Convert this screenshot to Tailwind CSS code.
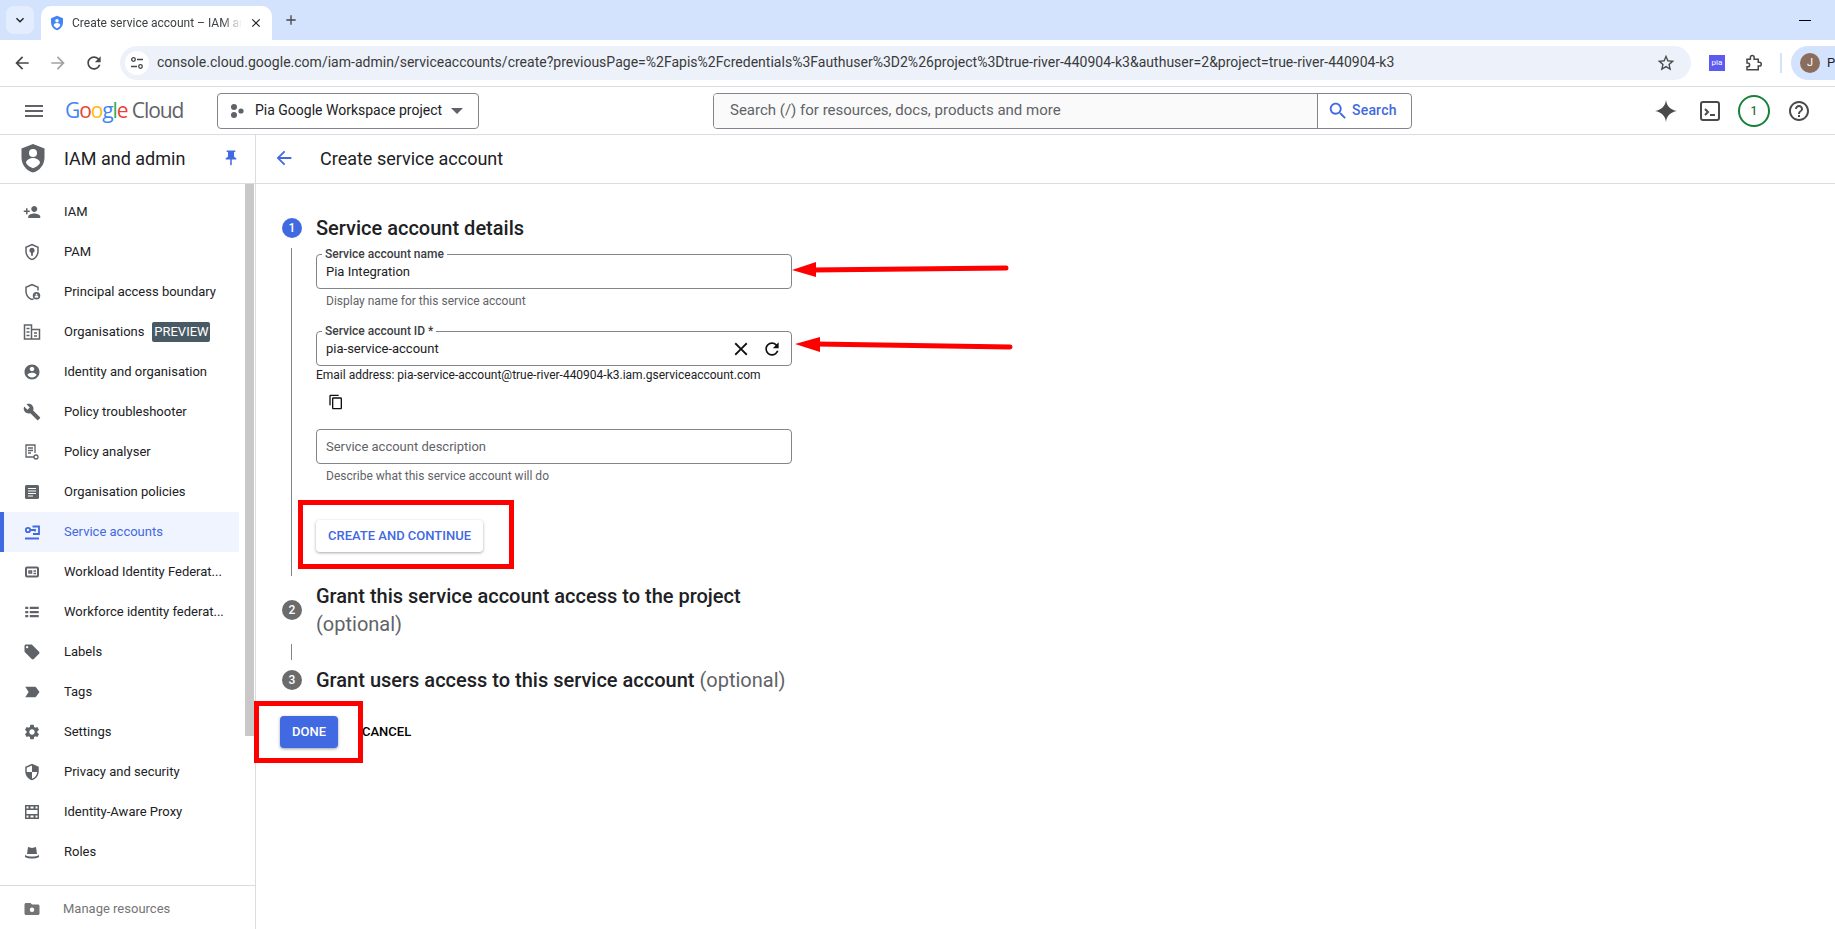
<!DOCTYPE html>
<html lang="en">
<head>
    <meta charset="UTF-8">
    <title>Create service account – IAM and admin</title>
    <script src="https://cdn.jsdelivr.net/npm/@tailwindcss/browser@4"></script>
</head>
<body class="h-screen overflow-hidden bg-white font-['Roboto',sans-serif] text-[#202124]">
<div class="relative h-[929px] w-[1835px] overflow-hidden flex flex-col">

    <!-- Browser tab strip -->
    <div class="h-[40px] shrink-0 bg-[#d3e3fd] flex items-start relative">
        <div class="ml-[6px] mt-[6px] w-[28px] h-[28px] rounded-[8px] bg-[#e3edfd] flex items-center justify-center">
            <svg class="w-[16px] h-[16px]" viewBox="0 0 24 24" fill="#1f1f1f"><path d="M7.41 8.59 12 13.17l4.59-4.58L18 10l-6 6-6-6z"/></svg>
        </div>
        <div class="ml-[7px] mt-[6px] w-[231px] h-[34px] bg-white rounded-t-[10px] flex items-center">
            <svg class="ml-[8px] w-[16px] h-[16px] shrink-0" viewBox="0 0 24 24"><path fill="#4285f4" d="M12 1 3 5v6c0 5.55 3.84 10.74 9 12 5.16-1.26 9-6.45 9-12V5z"/><circle cx="12" cy="8.5" r="2.6" fill="#fff"/><path fill="#fff" d="M7 15.5c0-2.2 2.8-3.4 5-3.4s5 1.2 5 3.4c-1 2-3 3.6-5 4.3-2-.7-4-2.3-5-4.3z"/></svg>
            <span class="ml-[7px] w-[170px] overflow-hidden whitespace-nowrap text-[12px] text-[#3c4043] [mask-image:linear-gradient(to_right,black_88%,transparent)]">Create service account – IAM and admin</span>
            <svg class="ml-[7px] w-[14px] h-[14px] shrink-0" viewBox="0 0 24 24" fill="#1f1f1f"><path d="M19 6.41 17.59 5 12 10.59 6.41 5 5 6.41 10.59 12 5 17.59 6.41 19 12 13.41 17.59 19 19 17.59 13.41 12z"/></svg>
        </div>
        <svg class="ml-[11px] mt-[12px] w-[16px] h-[16px]" viewBox="0 0 24 24" fill="#474747"><path d="M19 13h-6v6h-2v-6H5v-2h6V5h2v6h6z"/></svg>
        <div class="absolute left-[1799px] top-[20px] w-[12px] h-[1px] bg-black"></div>
    </div>

    <!-- Browser toolbar -->
    <div class="h-[47px] shrink-0 bg-white border-b border-[#dadce0] rounded-tl-[8px] flex items-center pb-[1px]">
        <svg class="ml-[12px] w-[20px] h-[20px]" viewBox="0 0 24 24" fill="#474747"><path d="M20 11H7.83l5.59-5.59L12 4l-8 8 8 8 1.41-1.41L7.83 13H20v-2z"/></svg>
        <svg class="ml-[16px] w-[20px] h-[20px]" viewBox="0 0 24 24" fill="#a3a3a3"><path d="M4 13h12.17l-5.59 5.59L12 20l8-8-8-8-1.41 1.41L16.17 11H4z"/></svg>
        <svg class="ml-[16px] w-[20px] h-[20px]" viewBox="0 0 24 24" fill="#474747"><path d="M17.65 6.35C16.2 4.9 14.21 4 12 4c-4.42 0-7.99 3.58-7.99 8s3.57 8 7.99 8c3.73 0 6.84-2.55 7.73-6h-2.08c-.82 2.33-3.04 4-5.65 4-3.31 0-6-2.69-6-6s2.69-6 6-6c1.66 0 3.14.69 4.22 1.78L13 11h7V4l-2.35 2.35z"/></svg>
        <div class="ml-[16px] w-[1571px] h-[34px] rounded-full bg-[#edf2fa] flex items-center">
            <div class="ml-[5px] w-[24px] h-[24px] rounded-full bg-white flex items-center justify-center">
                <svg class="w-[16px] h-[16px]" viewBox="0 0 16 16" fill="none" stroke="#474747" stroke-width="1.3"><circle cx="4.5" cy="4.5" r="1.8"/><path d="M8 4.5h6M2 11.5h6"/><circle cx="11.5" cy="11.5" r="1.8"/></svg>
            </div>
            <span class="ml-[8px] whitespace-nowrap text-[14px] tracking-[0.013px] text-[#3a3a3a]">console.cloud.google.com/iam-admin/serviceaccounts/create?previousPage=%2Fapis%2Fcredentials%3Fauthuser%3D2%26project%3Dtrue-river-440904-k3&amp;authuser=2&amp;project=true-river-440904-k3</span>
            <svg class="ml-auto mr-[15px] w-[20px] h-[20px]" viewBox="0 0 24 24" fill="#474747"><path d="M22 9.24l-7.19-.62L12 2 9.19 8.63 2 9.24l5.46 4.73L5.82 21 12 17.27 18.18 21l-1.63-7.03L22 9.24zM12 15.4l-3.76 2.27 1-4.28-3.32-2.88 4.38-.38L12 6.1l1.71 4.04 4.38.38-3.32 2.88 1 4.28L12 15.4z"/></svg>
        </div>
        <div class="ml-[18px] w-[16px] h-[16px] bg-[#5b5bf0] text-white text-[8px] leading-[15px] text-center">pia</div>
        <svg class="ml-[19px] w-[18px] h-[18px]" viewBox="0 0 24 24" fill="none" stroke="#474747" stroke-width="2"><path d="M4 7h4.5V4.5a2.5 2.5 0 0 1 5 0V7H19v4h1.5a2.5 2.5 0 0 1 0 5H19v5H4v-4h1a2.5 2.5 0 0 0 0-5H4z"/></svg>
        <div class="ml-[18px] w-[2px] h-[20px] bg-[#d3e3fd]"></div>
        <div class="ml-[9px] flex-1 h-[34px] rounded-l-full bg-[#d3e3fd] flex items-center overflow-hidden">
            <div class="ml-[9px] w-[20px] h-[20px] shrink-0 rounded-full bg-[#8a6d5c] text-white text-[11px] leading-[20px] text-center">J</div>
            <span class="ml-[7px] text-[13px] text-[#1f1f1f]">Pa</span>
        </div>
    </div>

    <!-- Google Cloud header -->
    <header class="h-[48px] shrink-0 border-b border-[#dadce0] flex items-center">
        <svg class="ml-[22px] w-[24px] h-[24px]" viewBox="0 0 24 24" fill="#5f6368"><path d="M3 18h18v-2H3v2zm0-5h18v-2H3v2zm0-7v2h18V6H3z"/></svg>
        <div class="ml-[19px] w-[130px] whitespace-nowrap text-[21px] tracking-[-1.1px] font-['Open_Sans',sans-serif]"><span class="text-[#4285f4]">G</span><span class="text-[#ea4335]">o</span><span class="text-[#fbbc04]">o</span><span class="text-[#4285f4]">g</span><span class="text-[#34a853]">l</span><span class="text-[#ea4335]">e</span> <span class="text-[#5f6368]">Cloud</span></div>
        <div class="ml-[22px] w-[262px] h-[36px] border border-[#80868b] rounded-[4px] flex items-center">
            <svg class="ml-[11px] w-[16px] h-[16px]" viewBox="0 0 16 16" fill="#5f6368"><circle cx="5" cy="4" r="3"/><circle cx="12" cy="8" r="2.6"/><circle cx="5" cy="12" r="3"/></svg>
            <span class="ml-[10px] text-[14px] whitespace-nowrap">Pia Google Workspace project</span>
            <span class="ml-[9px] w-0 h-0 border-x-[6px] border-x-transparent border-t-[6px] border-t-[#5f6368]"></span>
        </div>
        <div class="ml-[234px] w-[699px] h-[36px] border border-[#80868b] rounded-[4px] flex items-center overflow-hidden">
            <div class="flex-1 h-full bg-[#fafafa] flex items-center pl-[16px] text-[15px] text-[#5f6368]">Search (/) for resources, docs, products and more</div>
            <div class="w-[94px] h-full border-l border-[#80868b] flex items-center">
                <svg class="ml-[9px] w-[22px] h-[22px]" viewBox="0 0 24 24" fill="#4169e1"><path d="M15.5 14h-.79l-.28-.27C15.41 12.59 16 11.11 16 9.5 16 5.91 13.09 3 9.5 3S3 5.91 3 9.5 5.91 16 9.5 16c1.61 0 3.09-.59 4.23-1.57l.27.28v.79l5 4.99L20.49 19l-4.99-5zm-6 0C7.01 14 5 11.99 5 9.5S7.01 5 9.5 5 14 7.01 14 9.5 11.99 14 9.5 14z"/></svg>
                <span class="ml-[3px] text-[14px] tracking-[0.2px] font-medium text-[#4169e1]">Search</span>
            </div>
        </div>
        <svg class="ml-[243px] w-[22px] h-[22px]" viewBox="0 0 24 24" fill="#4a4a4a"><path d="M12 0c.9 6.7 4.4 10.6 12 12-7.6 1.4-11.1 5.3-12 12-.9-6.7-4.4-10.6-12-12 7.6-1.4 11.1-5.3 12-12z"/></svg>
        <svg class="ml-[22px] w-[22px] h-[22px]" viewBox="0 0 22 22" fill="none" stroke="#4a4a4a" stroke-width="2"><rect x="2" y="2" width="18" height="18" rx="2"/><path d="M6 9l3 3-3 3M11 15h5"/></svg>
        <div class="ml-[17px] w-[32px] h-[32px] rounded-full border-2 border-[#188038] flex items-center justify-center text-[12px] font-medium text-[#3c6e47]">1</div>
        <svg class="ml-[17px] w-[24px] h-[24px]" viewBox="0 0 24 24" fill="#4a4a4a"><path d="M11 18h2v-2h-2v2zm1-16C6.48 2 2 6.48 2 12s4.48 10 10 10 10-4.48 10-10S17.52 2 12 2zm0 18c-4.41 0-8-3.59-8-8s3.59-8 8-8 8 3.59 8 8-3.59 8-8 8zm0-14c-2.21 0-4 1.79-4 4h2c0-1.1.9-2 2-2s2 .9 2 2c0 2-3 1.75-3 5h2c0-2.25 3-2.5 3-5 0-2.21-1.79-4-4-4z"/></svg>
    </header>

    <div class="flex-1 flex min-h-0">
        <!-- Sidebar -->
        <aside class="w-[256px] shrink-0 border-r border-[#dadce0] flex flex-col">
            <div class="h-[49px] shrink-0 border-b border-[#dadce0] flex items-center pb-[2px]">
                <svg class="ml-[17px] w-[32px] h-[32px]" viewBox="0 0 32 32"><path fill="#5f6368" d="M16 2 4.5 6.5v9c0 7.2 4.9 13.3 11.5 15 6.6-1.7 11.5-7.8 11.5-15v-9z"/><circle cx="16" cy="11" r="4" fill="#fff"/><path fill="#fff" d="M9 21c0-3.5 4.5-5 7-5s7 1.5 7 5c-1.500 2.500-4 4.300-7 5.200-3-.9-5.500-2.700-7-5.200z"/></svg>
                <span class="ml-[15px] text-[18px]">IAM and admin</span>
                <svg class="ml-[37px] w-[18px] h-[18px]" viewBox="0 0 24 24" fill="#4169e1"><path d="M16 9V4h1c.55 0 1-.45 1-1s-.45-1-1-1H7c-.55 0-1 .45-1 1s.45 1 1 1h1v5c0 1.66-1.34 3-3 3v2h5.97v7l1 1 1-1v-7H19v-2c-1.66 0-3-1.34-3-3z"/></svg>
            </div>
            <div class="flex-1 min-h-0 flex">
                <nav class="w-[239px] pt-[8px] text-[13px] shrink-0">
                    <a class="h-[40px] flex items-center"><svg class="ml-[23px] w-[18px] h-[18px]" viewBox="0 0 24 24" fill="#5f6368"><path d="M15 12c2.21 0 4-1.79 4-4s-1.79-4-4-4-4 1.79-4 4 1.79 4 4 4zm-9-2V7H4v3H1v2h3v3h2v-3h3v-2H6zm9 4c-2.67 0-8 1.34-8 4v2h16v-2c0-2.66-5.33-4-8-4z"/></svg><span class="ml-[23px]">IAM</span></a>
                    <a class="h-[40px] flex items-center"><svg class="ml-[23px] w-[18px] h-[18px]" viewBox="0 0 24 24" fill="#5f6368"><path fill-rule="evenodd" d="M12 1 3 5v6c0 5.55 3.84 10.74 9 12 5.16-1.26 9-6.45 9-12V5zm0 2.2 7 3.1V11c0 4.5-3 8.7-7 9.9-4-1.2-7-5.4-7-9.9V6.3z"/><path d="M12 6.5a3.5 3.5 0 0 0-1.2 6.8V17h2.4v-3.7A3.5 3.5 0 0 0 12 6.5z"/></svg><span class="ml-[23px]">PAM</span></a>
                    <a class="h-[40px] flex items-center"><svg class="ml-[23px] w-[18px] h-[18px]" viewBox="0 0 24 24" fill="#5f6368"><path fill-rule="evenodd" d="M12 1 3 5v6c0 5.55 3.84 10.74 9 12 1-.2 2-.7 2.8-1.2l-1.3-1.5c-.5.3-1 .5-1.5.6-4-1.2-7-5.4-7-9.9V6.3l7-3.1 7 3.1V10h2V5z"/><circle cx="18" cy="17" r="5"/><circle cx="18" cy="15.5" r="1.2" fill="#fff"/><rect x="15.700" y="17" width="4.600" height="2.500" fill="#fff"/></svg><span class="ml-[23px]">Principal access boundary</span></a>
                    <a class="h-[40px] flex items-center"><svg class="ml-[23px] w-[18px] h-[18px]" viewBox="0 0 18 18" fill="none" stroke="#5f6368" stroke-width="1.5"><path d="M1.5 2h7v14h-7zM8.500 6.500h8V16h-8zM3.500 5.500h3M3.500 9h3M3.500 12.500h3M11 10h3M11 13h3"/></svg><span class="ml-[23px]">Organisations</span><span class="ml-[8px] w-[58px] h-[20px] rounded-[2px] bg-[#4a5a64] text-white text-center leading-[20px]">PREVIEW</span></a>
                    <a class="h-[40px] flex items-center"><svg class="ml-[23px] w-[18px] h-[18px]" viewBox="0 0 24 24" fill="#5f6368"><path d="M12 2C6.48 2 2 6.48 2 12s4.48 10 10 10 10-4.48 10-10S17.52 2 12 2zm0 3c1.66 0 3 1.34 3 3s-1.34 3-3 3-3-1.34-3-3 1.34-3 3-3zm0 14.2c-2.5 0-4.71-1.28-6-3.22.03-1.99 4-3.08 6-3.08 1.99 0 5.97 1.09 6 3.08-1.29 1.94-3.5 3.22-6 3.22z"/></svg><span class="ml-[23px]">Identity and organisation</span></a>
                    <a class="h-[40px] flex items-center"><svg class="ml-[23px] w-[18px] h-[18px]" viewBox="0 0 24 24" fill="#5f6368"><path d="M22.7 19l-9.1-9.1c.9-2.3.4-5-1.5-6.900-2-2-5-2.400-7.400-1.300L9 6 6 9 1.600 4.700C.4 7.100.9 10.100 2.900 12.100c1.900 1.900 4.600 2.400 6.900 1.500l9.100 9.100c.4.4 1 .4 1.400 0l2.300-2.300c.5-.4.5-1.100.1-1.400z"/></svg><span class="ml-[23px]">Policy troubleshooter</span></a>
                    <a class="h-[40px] flex items-center"><svg class="ml-[23px] w-[18px] h-[18px]" viewBox="0 0 18 18" fill="none" stroke="#5f6368" stroke-width="1.3"><path d="M11 14H3V2h9v8M5 5h5M5 7.500h5M5 10h3"/><circle cx="13" cy="14" r="2"/></svg><span class="ml-[23px]">Policy analyser</span></a>
                    <a class="h-[40px] flex items-center"><svg class="ml-[23px] w-[18px] h-[18px]" viewBox="0 0 18 18"><rect x="2" y="2" width="14" height="14" rx="1.5" fill="#5f6368"/><path stroke="#fff" stroke-width="1" d="M5 5.500h8M5 8h8M5 10.500h8M5 13h5"/></svg><span class="ml-[23px]">Organisation policies</span></a>
                    <a class="h-[40px] flex items-center bg-[#f0f4fe] border-l-4 border-[#4169e1] text-[#4169e1]"><svg class="ml-[19px] w-[18px] h-[18px]" viewBox="0 0 18 18" fill="none" stroke="#4169e1" stroke-width="1.8"><circle cx="5" cy="7" r="2.200"/><path d="M7.200 7H12v1.500M9.500 3.500H16V11H10M2 15.500h14"/></svg><span class="ml-[23px]">Service accounts</span></a>
                    <a class="h-[40px] flex items-center"><svg class="ml-[23px] w-[18px] h-[18px]" viewBox="0 0 18 18" fill="none" stroke="#5f6368" stroke-width="2"><rect x="3" y="4.500" width="12" height="9" rx="1"/><path stroke-width="1.5" d="M6 8h2.500v2H6zM10.500 8H13M10.500 10.500H13"/></svg><span class="ml-[23px]">Workload Identity Federat...</span></a>
                    <a class="h-[40px] flex items-center"><svg class="ml-[23px] w-[18px] h-[18px]" viewBox="0 0 24 24" fill="#5f6368"><path d="M3 13.500h4v-3H3v3zm0 5.500h4v-3H3v3zM3 8h4V5H3v3zm6 5.500h12v-3H9v3zm0 5.500h12v-3H9v3zM9 5v3h12V5H9z"/></svg><span class="ml-[23px]">Workforce identity federat...</span></a>
                    <a class="h-[40px] flex items-center"><svg class="ml-[23px] w-[18px] h-[18px]" viewBox="0 0 24 24" fill="#5f6368"><path d="M21.41 11.58l-9-9C12.05 2.22 11.55 2 11 2H4c-1.1 0-2 .9-2 2v7c0 .55.22 1.05.59 1.42l9 9c.36.36.86.58 1.41.58.55 0 1.05-.22 1.41-.59l7-7c.37-.36.59-.86.59-1.41 0-.55-.23-1.06-.59-1.42zM5.500 7C4.670 7 4 6.330 4 5.500S4.670 4 5.500 4 7 4.670 7 5.500 6.330 7 5.500 7z"/></svg><span class="ml-[23px]">Labels</span></a>
                    <a class="h-[40px] flex items-center"><svg class="ml-[23px] w-[18px] h-[18px]" viewBox="0 0 24 24" fill="#5f6368"><path d="M3 5h13c.67 0 1.27.33 1.63.84L22 12l-4.37 6.16c-.36.51-.96.84-1.63.84H3l4.5-7z"/></svg><span class="ml-[23px]">Tags</span></a>
                    <a class="h-[40px] flex items-center"><svg class="ml-[23px] w-[18px] h-[18px]" viewBox="0 0 24 24" fill="#5f6368"><path d="M19.14 12.94c.04-.3.06-.61.06-.94 0-.32-.02-.64-.07-.94l2.03-1.58c.18-.14.23-.41.12-.61l-1.92-3.32c-.12-.22-.37-.29-.59-.22l-2.39.96c-.5-.38-1.03-.7-1.62-.94l-.36-2.54c-.04-.24-.24-.41-.48-.41h-3.84c-.24 0-.43.17-.47.41l-.36 2.54c-.59.24-1.13.57-1.62.94l-2.39-.96c-.22-.08-.47 0-.59.22L2.74 8.87c-.12.21-.08.47.12.61l2.03 1.58c-.05.3-.09.63-.09.94s.02.64.07.94l-2.03 1.58c-.18.14-.23.41-.12.61l1.92 3.32c.12.22.37.29.59.22l2.39-.96c.5.38 1.03.7 1.62.94l.36 2.54c.05.24.24.41.48.41h3.84c.24 0 .44-.17.47-.41l.36-2.54c.59-.24 1.13-.56 1.62-.94l2.39.96c.22.08.47 0 .59-.22l1.92-3.32c.12-.22.07-.47-.12-.61l-2.01-1.58zM12 15.6c-1.98 0-3.6-1.62-3.6-3.6s1.62-3.6 3.6-3.6 3.6 1.62 3.6 3.6-1.62 3.6-3.6 3.6z"/></svg><span class="ml-[23px]">Settings</span></a>
                    <a class="h-[40px] flex items-center"><svg class="ml-[23px] w-[18px] h-[18px]" viewBox="0 0 24 24" fill="#5f6368"><path d="M12 1 3 5v6c0 5.55 3.84 10.74 9 12 5.16-1.26 9-6.45 9-12V5l-9-4zm0 10.99h7c-.53 4.12-3.28 7.79-7 8.94V12H5V6.3l7-3.11v8.8z"/></svg><span class="ml-[23px]">Privacy and security</span></a>
                    <a class="h-[40px] flex items-center"><svg class="ml-[23px] w-[18px] h-[18px]" viewBox="0 0 18 18" fill="#5f6368"><path fill-rule="evenodd" d="M2 2h14v14H2zM3.500 3.500v2h2v-2zm4 0v2h3v-2zm5 0v2h2v-2zM3.500 7v4h11V7zM3.500 12.500v2h2v-2zm4 0v2h3v-2zm5 0v2h2v-2z"/></svg><span class="ml-[23px]">Identity-Aware Proxy</span></a>
                    <a class="h-[40px] flex items-center"><svg class="ml-[23px] w-[18px] h-[18px]" viewBox="0 0 18 18" fill="#5f6368"><path d="M5 4c1.500 0 2.500 1 4 1s2.500-1 4-1l1 7H4z"/><path d="M2 12c2 1 4 1.500 7 1.500s5-.5 7-1.500v2c-2 1-4 1.500-7 1.500s-5-.5-7-1.500z"/></svg><span class="ml-[23px]">Roles</span></a>
                </nav>
                <div class="ml-[6px] w-[9px] h-[552px] bg-[#c8c8c8]"></div>
            </div>
            <div class="h-[44px] shrink-0 border-t border-[#dadce0] flex items-center text-[13px] text-[#757575] pt-[2px]">
                <svg class="ml-[23px] w-[18px] h-[18px]" viewBox="0 0 24 24" fill="#757575"><path fill-rule="evenodd" d="M20 6h-8l-2-2H4c-1.1 0-2 .9-2 2v12c0 1.1.9 2 2 2h16c1.1 0 2-.9 2-2V8c0-1.1-.9-2-2-2zm-8 4a3 3 0 1 0 0 6 3 3 0 0 0 0-6z"/></svg>
                <span class="ml-[22px]">Manage resources</span>
            </div>
        </aside>

        <!-- Main content -->
        <main class="flex-1 min-w-0 flex flex-col">
            <div class="h-[49px] shrink-0 border-b border-[#dadce0] flex items-center pb-[2px]">
                <svg class="ml-[17px] w-[22px] h-[22px]" viewBox="0 0 24 24" fill="#4169e1"><path d="M20 11H7.83l5.59-5.59L12 4l-8 8 8 8 1.41-1.41L7.83 13H20v-2z"/></svg>
                <h1 class="ml-[25px] text-[18px]">Create service account</h1>
            </div>

            <div class="pt-[30px]">
                <!-- Step 1 -->
                <div class="h-[28px] ml-[26px] flex items-center gap-[14px]">
                    <span class="w-[20px] h-[20px] rounded-full bg-[#4169e1] text-white text-[12px] font-medium text-center leading-[20px]">1</span>
                    <h2 class="text-[20px] font-medium leading-[28px]">Service account details</h2>
                </div>
                <div class="mt-[6px] ml-[35px] border-l border-[#80868b] w-[510px] h-[328px] pl-[24px] pt-[6px]">
                    <div class="relative w-[476px] h-[35px] border border-[#80868b] rounded-[4px] flex items-center pl-[9px] text-[13px]">
                        <span class="absolute left-[5px] -top-[8px] bg-white px-[3px] text-[12px] font-medium leading-[14px] text-[#3c4043]">Service account name</span>
                        Pia Integration
                    </div>
                    <p class="mt-[4px] ml-[10px] text-[12px] leading-[16px] text-[#5f6368]">Display name for this service account</p>
                    <div class="relative mt-[22px] w-[476px] h-[35px] border border-[#80868b] rounded-[4px] flex items-center pl-[9px] text-[13px]">
                        <span class="absolute left-[5px] -top-[8px] bg-white px-[3px] text-[12px] font-medium leading-[14px] text-[#3c4043]">Service account ID *</span>
                        pia-service-account
                        <svg class="ml-auto w-[22px] h-[22px]" viewBox="0 0 24 24" fill="#111"><path d="M19 6.41 17.59 5 12 10.59 6.41 5 5 6.41 10.59 12 5 17.59 6.41 19 12 13.41 17.59 19 19 17.59 13.41 12z"/></svg>
                        <svg class="ml-[10px] mr-[9px] w-[20px] h-[20px]" viewBox="0 0 24 24" fill="#111"><path d="M17.65 6.35C16.2 4.9 14.21 4 12 4c-4.42 0-7.99 3.58-7.99 8s3.57 8 7.99 8c3.73 0 6.84-2.55 7.73-6h-2.08c-.82 2.33-3.04 4-5.65 4-3.31 0-6-2.69-6-6s2.69-6 6-6c1.66 0 3.14.69 4.22 1.78L13 11h7V4l-2.35 2.35z"/></svg>
                    </div>
                    <p class="mt-[1px] text-[12px] leading-[16px] whitespace-nowrap">Email address: pia-service-account@true-river-440904-k3.iam.gserviceaccount.com</p>
                    <svg class="mt-[11px] ml-[12px] w-[16px] h-[16px]" viewBox="0 0 24 24" fill="#111"><path d="M16 1H4c-1.1 0-2 .9-2 2v14h2V3h12V1zm3 4H8c-1.1 0-2 .9-2 2v14c0 1.1.9 2 2 2h11c1.1 0 2-.9 2-2V7c0-1.1-.9-2-2-2zm0 16H8V7h11v14z"/></svg>
                    <div class="mt-[19px] w-[476px] h-[35px] border border-[#80868b] rounded-[4px] flex items-center pl-[9px] text-[13px] text-[#5f6368]">Service account description</div>
                    <p class="mt-[4px] ml-[10px] text-[12px] leading-[16px] text-[#5f6368]">Describe what this service account will do</p>
                    <button class="mt-[36px] w-[167px] h-[32px] rounded-[4px] bg-white shadow-[0_1px_3px_rgba(60,64,67,0.45)] text-[13px] font-medium text-[#4169e1]">CREATE AND CONTINUE</button>
                </div>

                <!-- Step 2 -->
                <div class="mt-[6px] ml-[26px] flex items-center gap-[14px]">
                    <span class="w-[20px] h-[20px] rounded-full bg-[#6b6b6b] text-white text-[12px] font-medium text-center leading-[20px]">2</span>
                    <h2 class="text-[20px] font-medium leading-[28px]">Grant this service account access to the project<br><span class="font-normal text-[#5f6368]">(optional)</span></h2>
                </div>
                <div class="mt-[6px] ml-[35px] w-[1px] h-[16px] bg-[#80868b]"></div>

                <!-- Step 3 -->
                <div class="mt-[6px] h-[28px] ml-[26px] flex items-center gap-[14px]">
                    <span class="w-[20px] h-[20px] rounded-full bg-[#6b6b6b] text-white text-[12px] font-medium text-center leading-[20px]">3</span>
                    <h2 class="text-[20px] font-medium leading-[28px]">Grant users access to this service account <span class="font-normal text-[#5f6368]">(optional)</span></h2>
                </div>

                <div class="mt-[22px] ml-[24px] flex items-center">
                    <button class="w-[58px] h-[32px] rounded-[4px] bg-[#4169e1] shadow-[0_1px_3px_rgba(60,64,67,0.5)] text-[13px] font-medium text-white">DONE</button>
                    <button class="ml-[24px] text-[13px] font-medium text-black">CANCEL</button>
                </div>
            </div>
        </main>
    </div>

    <!-- Red annotations drawn over the screenshot -->
    <svg class="absolute left-0 top-0 w-[1835px] h-[929px] pointer-events-none" viewBox="0 0 1835 929" fill="none">
        <rect x="300.5" y="502.5" width="211" height="64" stroke="#ff0000" stroke-width="5"/>
        <rect x="256.5" y="703.5" width="104" height="57" stroke="#ff0000" stroke-width="5"/>
        <path d="M812 270 L1006 268" stroke="#ff0000" stroke-width="5" stroke-linecap="round"/>
        <path d="M792 270 L816 262 L816 277 Z" fill="#ff0000"/>
        <path d="M816 344 L1010 347" stroke="#ff0000" stroke-width="5" stroke-linecap="round"/>
        <path d="M795 344 L820 337 L820 352 Z" fill="#ff0000"/>
    </svg>
</div>
</body>
</html>
